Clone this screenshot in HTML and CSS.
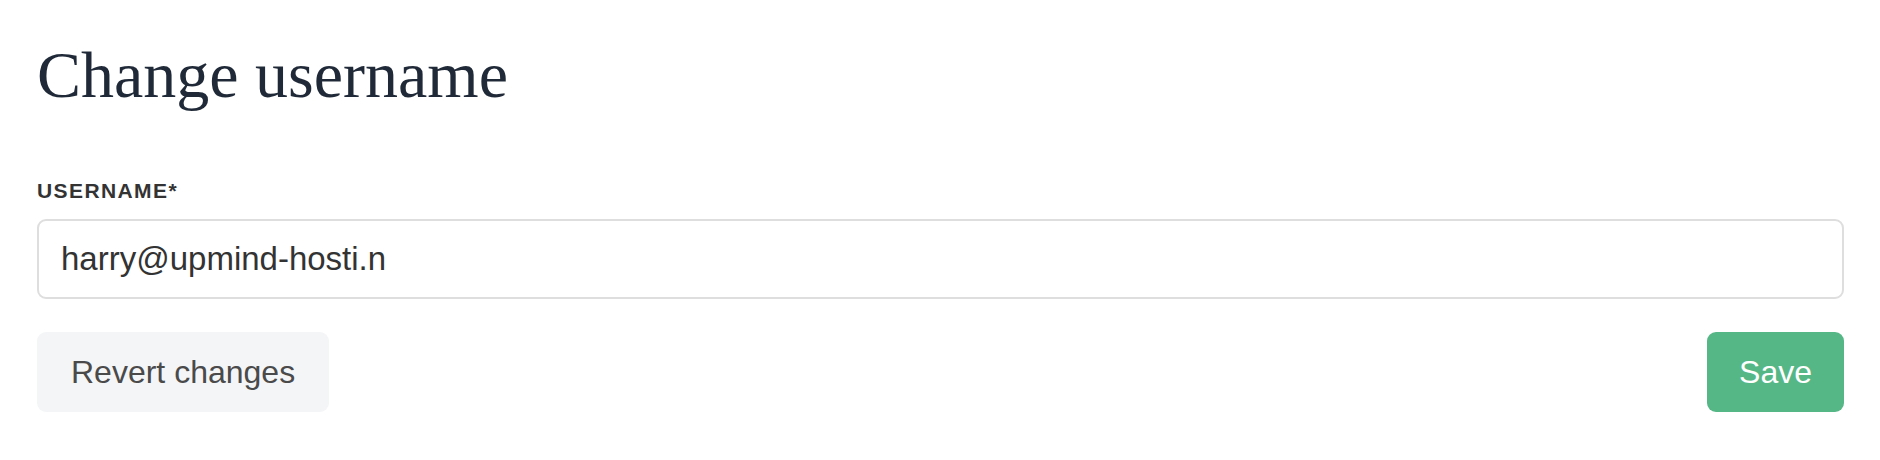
FILE: index.html
```html
<!DOCTYPE html>
<html lang="en">
<head>
<meta charset="utf-8">
<title>Change username</title>
<link rel="stylesheet" href="styles.css">
</head>
<body>
<main class="page">
  <h1 class="title">Change username</h1>
  <form class="form">
    <label class="label" for="username">USERNAME*</label>
    <input class="field" id="username" type="text" value="harry@upmind-hosti.n">
    <div class="actions">
      <button type="button" class="btn btn-secondary">Revert changes</button>
      <button type="submit" class="btn btn-primary">Save</button>
    </div>
  </form>
</main>
</body>
</html>
```
FILE: styles.css
```css
html, body {
  margin: 0;
  padding: 0;
  background: #ffffff;
}

.page {
  padding: 36px 36px 0 37px;
  font-family: "Liberation Sans", Arial, sans-serif;
}

.title {
  margin: 0;
  font-family: "Liberation Serif", "Times New Roman", serif;
  font-weight: 400;
  font-size: 66px;
  line-height: 78px;
  color: #1f2937;
}

.form {
  display: flex;
  flex-direction: column;
  margin-top: 64px;
}

.label {
  font-size: 21px;
  line-height: 25px;
  font-weight: 700;
  letter-spacing: 1.4px;
  color: #333333;
  margin-bottom: 16px;
}

.field {
  box-sizing: border-box;
  width: 100%;
  height: 80px;
  margin: 0;
  padding: 0 22px;
  border: 2px solid #dedede;
  border-radius: 9px;
  font-family: "Liberation Sans", Arial, sans-serif;
  font-size: 33px;
  color: #333333;
  background: #ffffff;
  outline: none;
}

.actions {
  display: flex;
  justify-content: space-between;
  margin-top: 33px;
}

.btn {
  box-sizing: border-box;
  height: 80px;
  padding: 0 34px;
  border: none;
  border-radius: 9px;
  font-family: "Liberation Sans", Arial, sans-serif;
  font-size: 32px;
  cursor: pointer;
}

.btn-secondary {
  background: #f4f5f7;
  color: #4a4a4a;
}

.btn-primary {
  padding: 0 32px;
  background: #55b786;
  color: #ffffff;
}
```
